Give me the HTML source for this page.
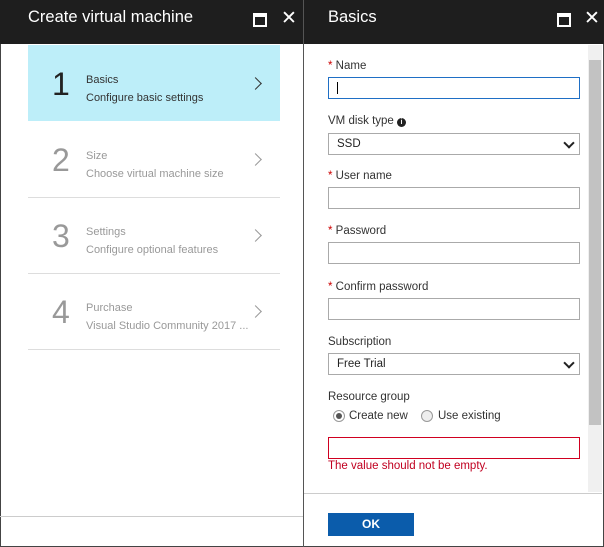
<!DOCTYPE html><html><head><style>
body{margin:0;width:604px;height:547px;background:#fff;font-family:"Liberation Sans",sans-serif;position:relative;overflow:hidden}
.a{position:absolute}
.hd{background:#1e1e1e;height:44px;top:0;color:#fff}
.lbl{font-size:11.5px;color:#333;left:328px}
.st{color:#c00}
.in{left:328px;width:250px;height:20px;border:1px solid #aaa;background:#fff}
.sel{font-size:11.5px;color:#222}
.sel span{position:absolute;left:8px;top:4px}
.chev{position:absolute;right:6px;top:5px;width:6px;height:6px;border-right:2px solid #222;border-bottom:2px solid #222;transform:rotate(45deg)}
.num{font-size:32px;left:52px;color:#999}
.t1{font-size:11px;left:86px;color:#999}
.ar{left:251px;width:8px;height:8px;border-right:1.5px solid #999;border-top:1.5px solid #999;transform:rotate(45deg)}
.ln{left:28px;width:252px;height:1px;background:#ddd}
</style></head><body>
<div class="a" style="left:0;top:0;width:602px;height:545px;border:1px solid #444"></div>
<div class="a hd" style="left:0;width:303px"><div class="a" style="left:28px;top:8px;font-size:16.5px">Create virtual machine</div>
<div class="a" style="left:253px;top:13px;width:10px;height:8px;border:2px solid #fff;border-top-width:4px"></div>
<div class="a" style="left:281px;top:7px;font-size:19px">✕</div></div>
<div class="a hd" style="left:304px;width:300px"><div class="a" style="left:24px;top:8px;font-size:16.5px">Basics</div>
<div class="a" style="left:253px;top:13px;width:10px;height:8px;border:2px solid #fff;border-top-width:4px"></div>
<div class="a" style="left:280px;top:7px;font-size:19px">✕</div></div>
<div class="a" style="left:303px;top:0;width:1px;height:547px;background:#555"></div>
<div class="a" style="left:28px;top:45px;width:252px;height:76px;background:#bdeef9"></div>
<div class="a num" style="top:66px;color:#222">1</div><div class="a t1" style="top:74px;color:#333">Basics</div><div class="a t1" style="top:92px;color:#333">Configure basic settings</div><div class="a ar" style="top:79px;border-color:#333"></div>
<div class="a num" style="top:142px">2</div><div class="a t1" style="top:150px">Size</div><div class="a t1" style="top:168px">Choose virtual machine size</div><div class="a ar" style="top:155px"></div>
<div class="a ln" style="top:197px"></div>
<div class="a num" style="top:218px">3</div><div class="a t1" style="top:226px">Settings</div><div class="a t1" style="top:244px">Configure optional features</div><div class="a ar" style="top:231px"></div>
<div class="a ln" style="top:273px"></div>
<div class="a num" style="top:294px">4</div><div class="a t1" style="top:302px">Purchase</div><div class="a t1" style="top:320px">Visual Studio Community 2017 ...</div><div class="a ar" style="top:307px"></div>
<div class="a ln" style="top:349px"></div>
<div class="a" style="left:0;top:516px;width:303px;height:1px;background:#ccc"></div>
<div class="a" style="left:588px;top:45px;width:14px;height:447px;background:#f0f0f0"></div>
<div class="a" style="left:589px;top:60px;width:12px;height:365px;background:#c2c2c2"></div>
<div class="a lbl" style="top:60px"><span class="st">*</span> Name</div>
<div class="a in" style="top:77px;border:1px solid #1f6fc5"><div class="a" style="left:8px;top:4px;width:1px;height:12px;background:#000"></div></div>
<div class="a lbl" style="top:115px">VM disk type <span style="display:inline-block;width:9px;height:9px;border-radius:50%;background:#222;color:#fff;font-size:7px;text-align:center;line-height:9px;font-weight:bold;vertical-align:0">i</span></div>
<div class="a in sel" style="top:133px"><span>SSD</span><i class="chev"></i></div>
<div class="a lbl" style="top:170px"><span class="st">*</span> User name</div>
<div class="a in" style="top:187px"></div>
<div class="a lbl" style="top:225px"><span class="st">*</span> Password</div>
<div class="a in" style="top:242px"></div>
<div class="a lbl" style="top:281px"><span class="st">*</span> Confirm password</div>
<div class="a in" style="top:298px"></div>
<div class="a lbl" style="top:336px">Subscription</div>
<div class="a in sel" style="top:353px"><span>Free Trial</span><i class="chev"></i></div>
<div class="a lbl" style="top:391px">Resource group</div>
<div class="a" style="left:333px;top:410px;width:10px;height:10px;border:1px solid #999;border-radius:50%;background:#fff"><div class="a" style="left:2px;top:2px;width:6px;height:6px;border-radius:50%;background:#555"></div></div>
<div class="a lbl" style="left:349px;top:410px">Create new</div>
<div class="a" style="left:421px;top:410px;width:10px;height:10px;border:1px solid #999;border-radius:50%;background:#eee"></div>
<div class="a lbl" style="left:438px;top:410px">Use existing</div>
<div class="a in" style="top:437px;border:1px solid #d00020"></div>
<div class="a lbl" style="top:460px;color:#c00020">The value should not be empty.</div>
<div class="a" style="left:304px;top:493px;width:298px;height:1px;background:#ccc"></div>
<div class="a" style="left:328px;top:513px;width:86px;height:23px;background:#0b5cab;color:#fff;font-weight:bold;font-size:12px;text-align:center;line-height:23px">OK</div>
</body></html>
